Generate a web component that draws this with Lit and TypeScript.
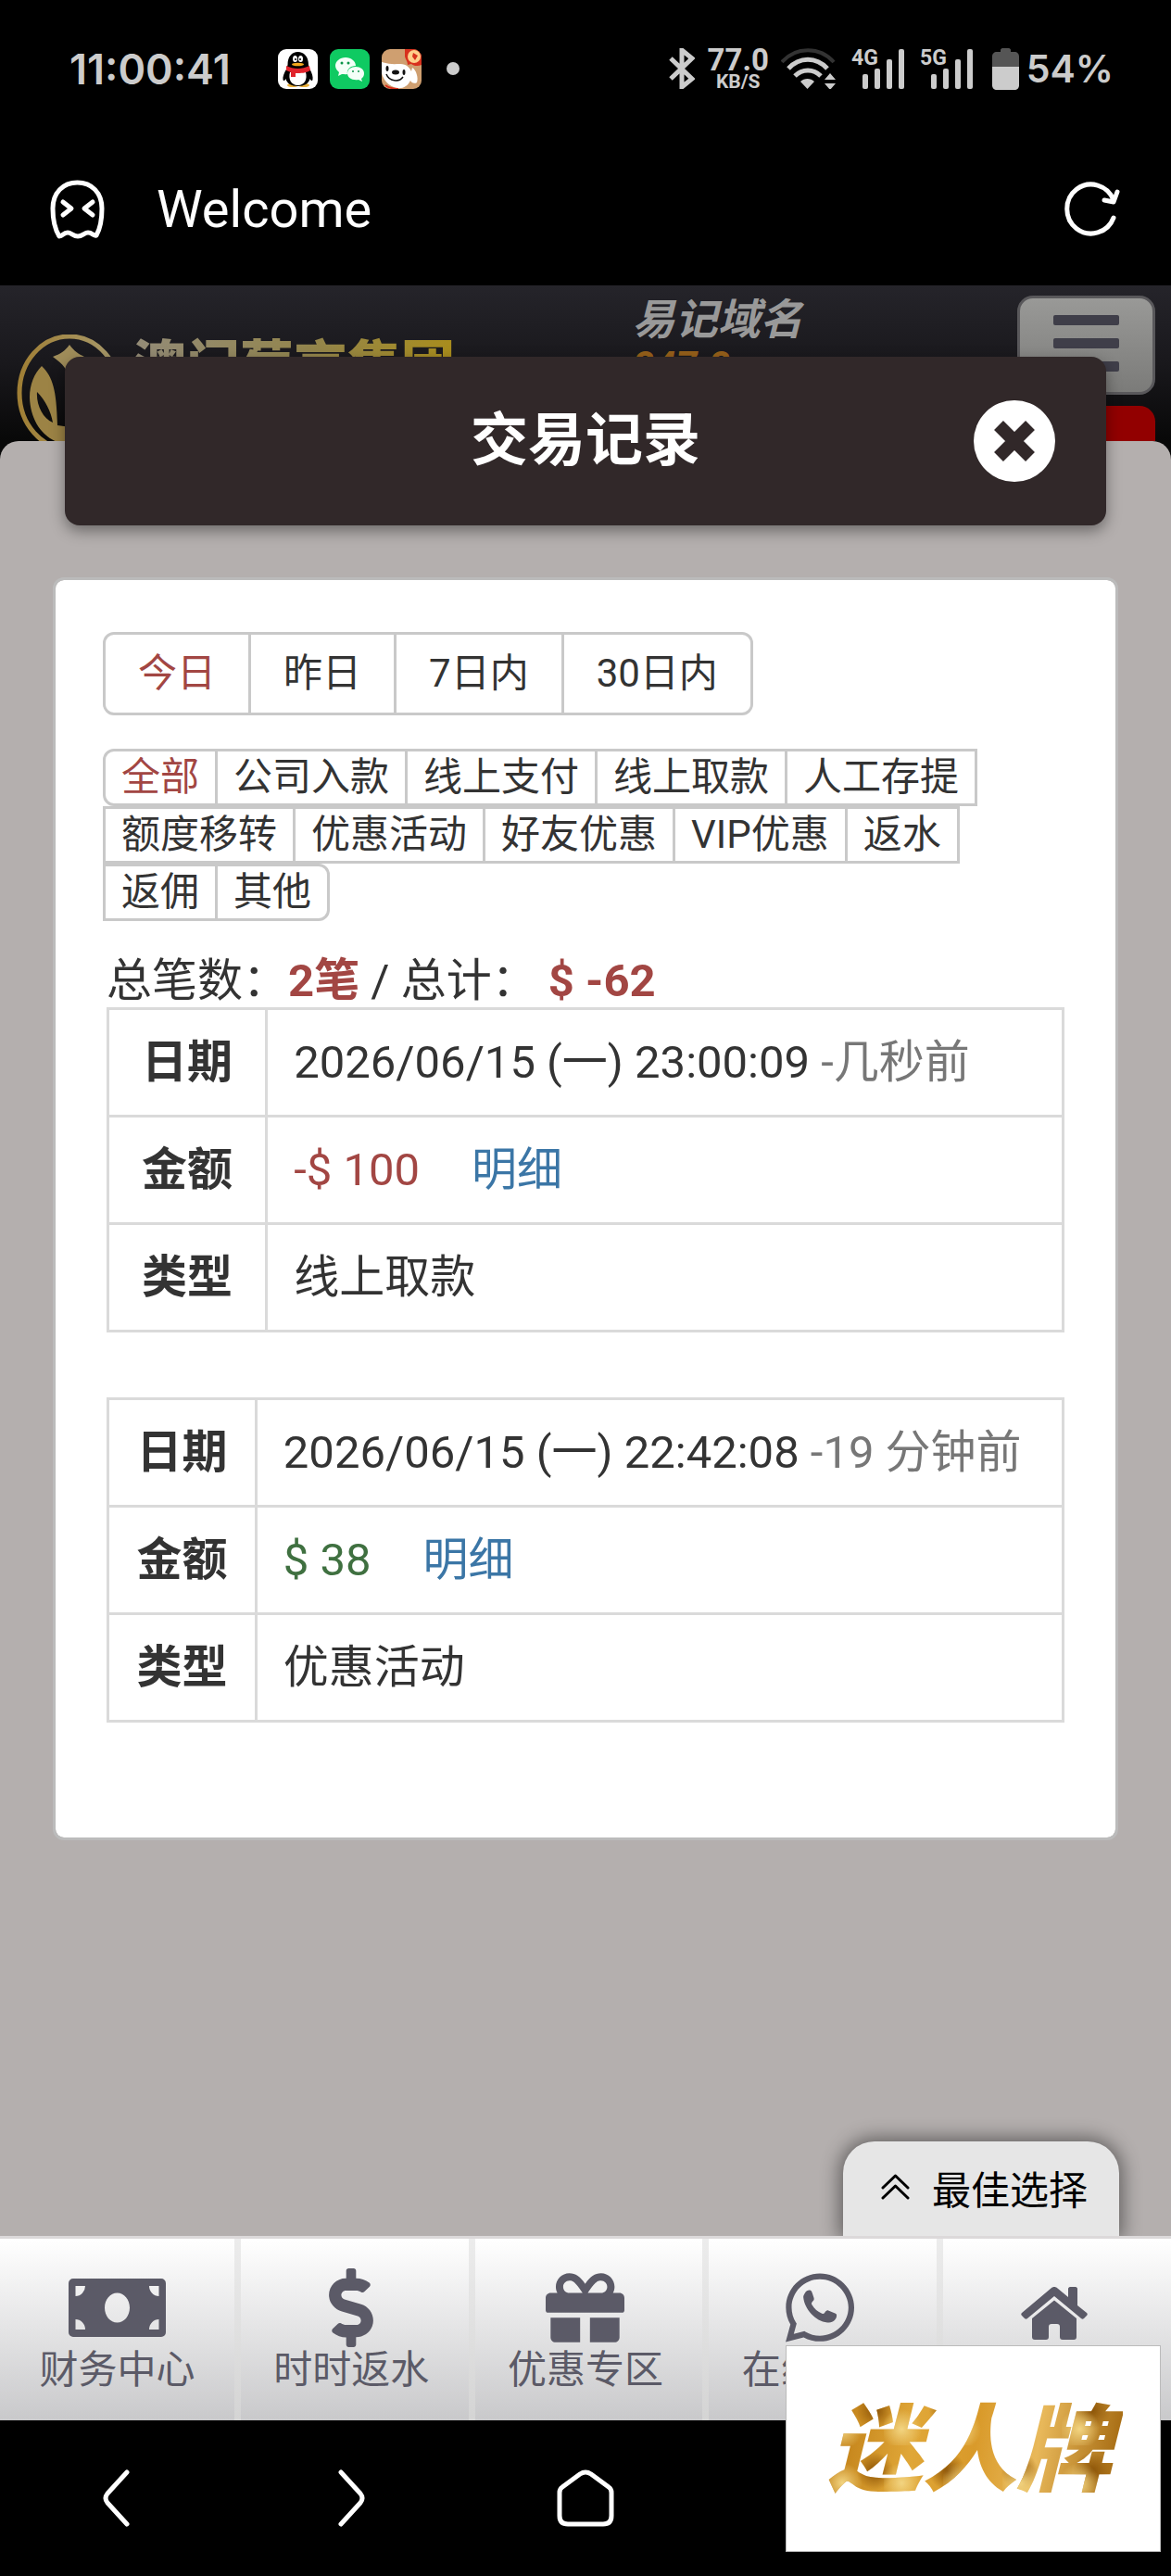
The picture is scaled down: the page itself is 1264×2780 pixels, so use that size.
import { LitElement, html, css, svg } from "lit";
import { customElement, state } from "lit/decorators.js";
import { classMap } from "lit/directives/class-map.js";

interface TradeRecord {
  date: string;
  ago: string;
  amount: string;
  positive: boolean;
  kind: string;
}

const RANGES = ["今日", "昨日", "7日内", "30日内"];

const KINDS = [
  "全部", "公司入款", "线上支付", "线上取款", "人工存提",
  "额度移转", "优惠活动", "好友优惠", "VIP优惠", "返水",
  "返佣", "其他",
];

const RECORDS: TradeRecord[] = [
  { date: "2026/06/15 (一) 23:00:09", ago: "-几秒前", amount: "-$ 100", positive: false, kind: "线上取款" },
  { date: "2026/06/15 (一) 22:42:08", ago: "-19 分钟前", amount: "$ 38", positive: true, kind: "优惠活动" },
];

const moneyIcon = svg`<svg width="105" height="85" viewBox="0 0 105 85" aria-hidden="true">
  <path fill-rule="evenodd" d="M5 11h95a5 5 0 0 1 5 5v53a5 5 0 0 1-5 5H5a5 5 0 0 1-5-5V16a5 5 0 0 1 5-5z
    M52.500 26.500c-7.500 0-13.500 7-13.500 16s6 16 13.500 16 13.500-7 13.500-16-6-16-13.500-16z
    M7.500 19v11a10.500 11 0 0 0 10.500-11z M97.500 19v11a10.500 11 0 0 1-10.500-11z
    M7.500 66v-11a10.500 11 0 0 1 10.500 11z M97.500 66v-11a10.500 11 0 0 0-10.500 11z"/></svg>`;

const dollarIcon = svg`<svg width="48" height="85" viewBox="0 0 288 512" aria-hidden="true">
  <path d="M209.200 233.400l-108-31.600C88.700 198.200 80 186.500 80 173.500c0-16.300 13.200-29.500 29.500-29.500h66.300c12.200 0 24.200 3.700 34.200 10.500 6.100 4.100 14.300 3.100 19.500-2l34.800-34c7.100-6.900 6.100-18.400-1.800-24.500C238 74.800 207.400 64.100 176 64V16c0-8.800-7.200-16-16-16h-32c-8.800 0-16 7.200-16 16v48h-2.500C45.800 64-5.400 118.700.500 183.600c4.200 46.100 39.400 83.600 83.800 96.600l102.500 30c12.500 3.700 21.200 15.300 21.200 28.300 0 16.300-13.200 29.500-29.500 29.500h-66.300C100 368 88 364.300 78 357.500c-6.100-4.100-14.300-3.100-19.500 2l-34.800 34c-7.100 6.900-6.100 18.400 1.800 24.500 24.500 19.200 55.100 29.900 86.500 30v48c0 8.800 7.200 16 16 16h32c8.800 0 16-7.200 16-16v-48.200c46.600-.900 90.300-28.600 105.700-72.700 21.500-61.600-14.600-124.800-72.500-141.700z"/></svg>`;

const giftIcon = svg`<svg width="85" height="85" viewBox="0 0 512 512" aria-hidden="true">
  <path d="M32 448c0 17.700 14.300 32 32 32h160V320H32v128zm256 32h160c17.700 0 32-14.300 32-32V320H288v160zm192-320h-42.100c6.200-12.100 10.100-25.500 10.100-40 0-48.500-39.500-88-88-88-41.600 0-68.500 21.300-103 68.300-34.500-47-61.400-68.300-103-68.300-48.500 0-88 39.500-88 88 0 14.500 3.800 27.900 10.100 40H32c-17.700 0-32 14.300-32 32v80c0 8.800 7.200 16 16 16h480c8.800 0 16-7.200 16-16v-80c0-17.700-14.300-32-32-32zm-326.100 0c-22.100 0-40-17.900-40-40s17.900-40 40-40c19.900 0 34.600 3.300 86.100 80h-86.100zm206.100 0h-86.100c51.400-76.500 65.700-80 86.100-80 22.100 0 40 17.900 40 40s-17.900 40-40 40z"/></svg>`;

const chatIcon = svg`<svg width="74" height="85" viewBox="0 0 448 512" aria-hidden="true">
  <path d="M380.900 97.100C339 55.100 283.200 32 223.900 32c-122.400 0-222 99.600-222 222 0 39.100 10.200 77.300 29.600 111L0 480l117.700-30.900c32.400 17.700 68.900 27 106.100 27h.100c122.300 0 224.100-99.600 224.100-222 0-59.300-25.200-115-67.100-157zm-157 341.600c-33.200 0-65.700-8.900-94-25.700l-6.700-4-69.800 18.300L72 359.200l-4.400-7c-18.500-29.400-28.200-63.300-28.200-98.200 0-101.700 82.800-184.500 184.600-184.500 49.300 0 95.600 19.200 130.400 54.100 34.800 34.900 56.200 81.200 56.100 130.500 0 101.800-84.900 184.600-186.600 184.600z"/>
  <path d="M126 160c8-14 24-22 36-18 8 3 10 10 13 20l10 30c3 10-2 16-10 25-7 8-7 12-3 19 15 26 38 46 66 58 8 3 12 1 17-5 8-11 14-18 24-15l44 19c10 5 12 9 10 20-5 26-30 40-60 40-80-8-150-90-157-165-1-11 5-20 10-28z"/></svg>`;

const homeIcon = svg`<svg width="72" height="85" viewBox="0 0 72 85" aria-hidden="true">
  <path d="M32.500 21.500c2-2 5-2 7 0L51 31V22c0-1 1-2 2-2h6c1 0 2 1 2 2v18l10 8c1 1 1 2 0 3l-3 3c-1 1-2 1-3 0L36 30 7 54c-1 1-2 1-3 0l-3-3c-1-1-1-2 0-3z"/>
  <path d="M36 34.500L60 54v20c0 2-1 3-3 3H45c-2 0-3-1-3-3V63c0-2-1-3-3-3h-6c-2 0-3 1-3 3v11c0 2-1 3-3 3H15c-2 0-3-1-3-3V54z"/></svg>`;

const NAV = [
  { label: "财务中心", icon: moneyIcon },
  { label: "时时返水", icon: dollarIcon },
  { label: "优惠专区", icon: giftIcon },
  { label: "在线客服", icon: chatIcon },
  { label: "首页", icon: homeIcon },
];

const signal = (label: string) => svg`<svg class="signal" width="58" height="44" viewBox="0 0 58 44" role="img" aria-label=${label}>
  <text x="0" y="18" class="net">${label}</text>
  <rect x="12" y="28" width="6" height="16" rx="2"/><rect x="25" y="22" width="6" height="22" rx="2"/>
  <rect x="38" y="12" width="6" height="32" rx="2"/><rect x="51" y="1" width="6" height="43" rx="2"/></svg>`;

@customElement("status-bar")
export class StatusBar extends LitElement {
  static styles = css`
    :host {
      display: flex;
      align-items: center;
      height: 148px;
      padding: 0 62px 0 75px;
      color: #ccc;
      font-family: Inter, "Noto Sans CJK SC", sans-serif;
    }
    svg { display: block; flex: none; fill: currentColor; }
    .time { font-size: 45px; font-weight: 600; }
    .apps { display: flex; align-items: center; gap: 13px; margin-left: 51px; }
    .dot { width: 14px; height: 14px; margin-left: 27px; border-radius: 50%; background: #ccc; }
    .right { display: flex; align-items: center; margin-left: auto; }
    .speed { display: flex; flex-direction: column; align-items: center; width: 70px; margin: 0 11px 0 12px; font-family: Roboto, sans-serif; font-weight: 700; }
    .rate { font-size: 33px; line-height: 28px; }
    .unit { font-size: 21px; line-height: 18px; }
    .wifi { margin-right: 16px; }
    .cell { display: flex; gap: 16px; }
    .signal { overflow: visible; }
    .net { font: 700 23px Roboto, sans-serif; }
    .battery { margin: 0 8px 0 20px; }
    .percent { font-size: 41px; font-weight: 600; }
  `;

  render() {
    return html`
      <span class="time">11:00:41</span>
      <div class="apps">
        <svg width="43" height="43" viewBox="0 0 43 43" aria-hidden="true">
          <rect width="43" height="43" rx="9" fill="#fff"/>
          <ellipse cx="16" cy="39" rx="6" ry="2" fill="#eab03a"/><ellipse cx="28" cy="39" rx="6" ry="2" fill="#eab03a"/>
          <path fill="#000" d="M10.500 17C10.500 8 15 3 21.500 3S33 8 33 17l1 4c3 5 4 9 3.500 12-.500 2-2 1-3-1-1 5-6 8-13 8s-12-3-13-8c-1 2-2.500 3-3 1-.500-3 1-7 4-12z"/>
          <path fill="#fff" d="M13 25h17c2 7-1 14-8.500 14S11 32 13 25z"/>
          <path fill="#e0242c" d="M9 18c8 4 17 4 25 0l1 5c-5 3-10 3-16 3v4h-5v-5l-5-2z"/>
          <ellipse cx="18.500" cy="10.500" rx="2.500" ry="3.500" fill="#fff"/><ellipse cx="24.500" cy="10.500" rx="2.500" ry="3.500" fill="#fff"/>
          <circle cx="19" cy="11" r="1" fill="#000"/><circle cx="24" cy="11" r="1" fill="#000"/>
          <ellipse cx="21.500" cy="16.500" rx="6.500" ry="1.700" fill="#f3a81c"/>
        </svg>
        <svg width="43" height="43" viewBox="0 0 43 43" aria-hidden="true">
          <rect width="43" height="43" rx="9" fill="#0fca62"/>
          <path fill="#f4fff8" d="M17 9c6 0 11 4 11 9-6 0-10 4-9 9-2 .500-4 0-6 0l-4 2 1-4c-2-2-4-4-4-7 0-5 5-9 11-9z"/>
          <path fill="#f4fff8" d="M28 19c5 0 9 3 9 7 0 3-1 4-3 6l1 3-4-2c-7 1-12-2-12-7 0-4 4-7 9-7z"/>
          <circle cx="13" cy="15" r="1.500" fill="#0a9448"/><circle cx="20" cy="15" r="1.500" fill="#0a9448"/>
          <circle cx="25" cy="24" r="1" fill="#0a9448"/><circle cx="31" cy="24" r="1" fill="#0a9448"/>
        </svg>
        <svg width="43" height="43" viewBox="0 0 43 43" aria-hidden="true">
          <defs><clipPath id="tile"><rect width="43" height="43" rx="9"/></clipPath></defs>
          <g clip-path="url(#tile)">
            <rect width="43" height="43" fill="#cf9f70"/>
            <path fill="#d8311d" d="M25 0h18v17c-4 2-9 1-11-1l-4 1c0-4-2-5-3-9z"/>
            <circle cx="35" cy="8" r="7" fill="#ffcf8b"/><path fill="#d8311d" d="M34 4l5 3-3 5-3-4z"/>
            <path fill="#fff" d="M0 14c10 3 15 2 20 2 7 0 10 4 12 8l1-4c4 2 7 11 5 16-3 2-6 0-7-2-3 6-8 9-15 8C8 40 2 34 0 26z"/>
            <ellipse cx="15" cy="25" rx="4" ry="2.500" fill="#111"/>
            <ellipse cx="6" cy="21" rx="1.500" ry="3" fill="#111"/><ellipse cx="24" cy="25" rx="1.500" ry="3" fill="#111"/>
            <path d="M5 27c3 8 14 9 18 3" fill="none" stroke="#111" stroke-width="1.500"/>
            <path d="M4 39c4 3 9 4 14 4" fill="none" stroke="#d8311d" stroke-width="2"/>
          </g>
        </svg>
      </div>
      <span class="dot"></span>
      <div class="right">
        <svg width="28" height="44" viewBox="0 0 28 44" role="img" aria-label="蓝牙">
          <path d="M2 11l23 22-11 9V2l11 9L2 33" fill="none" stroke="currentColor" stroke-width="5"/>
        </svg>
        <div class="speed"><span class="rate">77.0</span><span class="unit">KB/S</span></div>
        <svg class="wifi" width="60" height="44" viewBox="0 0 60 44" role="img" aria-label="无线网络">
          <g fill="none" stroke="currentColor" stroke-width="4">
            <path d="M1 15C16-2 42-2 57 15" stroke="#333"/>
            <path d="M8 22c12-13 30-13 42 0M15 30c8-8 20-8 28 0" stroke-width="5"/>
          </g>
          <path d="M21 36c4-4 11-4 15 0l-7.500 8z"/>
          <path d="M47 34h12l-6-7zM47 38h12l-6 7z"/>
        </svg>
        <div class="cell">${signal("4G")}${signal("5G")}</div>
        <svg class="battery" width="29" height="45" viewBox="0 0 29 45" role="img" aria-label="电量">
          <path fill="#555" d="M9 2c0-1 1-2 2-2h7c1 0 2 1 2 2v2h4c3 0 5 2 5 5v12H0V9c0-3 2-5 5-5h4z"/>
          <path d="M0 20h29v20c0 3-2 5-5 5H5c-3 0-5-2-5-5z"/>
        </svg>
        <span class="percent">54%</span>
      </div>
    `;
  }
}

@customElement("record-table")
export class RecordTable extends LitElement {
  static properties = { record: { attribute: false } };
  declare record: TradeRecord;

  static styles = css`
    :host { display: block; }
    table { width: 100%; border-collapse: collapse; font-size: 49px; line-height: 57px; }
    th, td { padding: 28px; border: 3px solid #dadada; text-align: left; white-space: nowrap; }
    th { font-weight: 700; text-align: center; }
    td { font-weight: 400; }
    .ago { color: #777; }
    .minus { color: #a24643; }
    .plus { color: #3f7040; }
    .detail { margin-left: 56px; color: #3b76a6; text-decoration: none; }
  `;

  render() {
    const r = this.record;
    return html`
      <table>
        <tbody>
          <tr><th scope="row">日期</th><td>${r.date} <span class="ago">${r.ago}</span></td></tr>
          <tr><th scope="row">金额</th><td><span class=${r.positive ? "plus" : "minus"}>${r.amount}</span><a class="detail" href="#detail">明细</a></td></tr>
          <tr><th scope="row">类型</th><td>${r.kind}</td></tr>
        </tbody>
      </table>
    `;
  }
}

@customElement("app-root")
export class AppRoot extends LitElement {
  @state() private range = 0;
  @state() private kind = 0;

  static styles = css`
    :host {
      position: relative;
      display: flex;
      flex-direction: column;
      min-height: 100vh;
      background: #000;
      color: #333;
      font-family: Roboto, "Noto Sans CJK SC", sans-serif;
    }
    button { margin: 0; padding: 0; border: 0; background: none; color: inherit; font: inherit; cursor: pointer; }
    a { color: inherit; text-decoration: none; }
    svg { display: block; flex: none; }

    .browser { display: flex; align-items: center; height: 160px; padding: 0 55px 4px 54px; box-sizing: border-box; color: #fff; }
    .page-name { margin-left: 55px; font-size: 56px; line-height: 66px; }
    .reload { margin-left: auto; }
    .stroke { fill: none; stroke: currentColor; stroke-linecap: round; stroke-linejoin: round; }

    .site { display: grid; grid-template-columns: 54% 1fr auto; align-items: start; height: 168px; overflow: hidden; background: linear-gradient(#25242a, #19181c 50%, #080808); }
    .brand { display: flex; gap: 11px; padding: 53px 0 0 18px; }
    .brand-name { font-size: 58px; font-weight: 900; line-height: 68px; white-space: nowrap; color: transparent; background: linear-gradient(90deg, #948c78, #93854d 55%, #a98d1c); background-clip: text; -webkit-background-clip: text; }
    .domain { padding-top: 12px; font-style: italic; font-weight: 700; }
    .domain-label { font-size: 46px; line-height: 50px; color: #999; }
    .domain-name { font-size: 42px; line-height: 50px; color: #96601a; }
    .tools { display: flex; flex-direction: column; gap: 12px; padding: 11px 17px 0 0; }
    .menu { display: flex; flex-direction: column; align-items: center; gap: 14px; box-sizing: border-box; width: 149px; height: 107px; padding-top: 18px; border: 3px solid #59585b; border-radius: 17px; background: linear-gradient(#999997, #7b7b79); }
    .menu-bar { width: 71px; height: 11px; border-radius: 2px; background: #3f3e49; }
    .alert { height: 60px; border-radius: 17px 17px 0 0; background: #920000; }

    .under { display: flex; flex: 1; flex-direction: column; background: #080808; }
    .panel { display: flex; flex: 1; flex-direction: column; border-radius: 20px 20px 0 0; background: #b4afae; }
    .title-bar { position: relative; display: grid; grid-template-columns: 1fr auto 1fr; align-items: center; height: 182px; margin: -91px 70px 0; padding: 0 55px; border-radius: 16px; background: #312829; box-shadow: 0 6px 16px rgba(0, 0, 0, 0.4); }
    .title { grid-column: 2; margin: 0; color: #fff; font-size: 62px; font-weight: 700; line-height: 80px; }
    .close { justify-self: end; }

    .card { margin: 56px 57px 0; padding: 56px 51px 124px; border: 3px solid #bbb; border-radius: 12px; background: #fff; background-clip: padding-box; }
    .ranges, .kinds { display: flex; flex-wrap: wrap; padding-right: 4px; font-size: 42px; }
    .ranges { line-height: 84px; }
    .kinds { margin-top: 36px; line-height: 56px; }
    .choice { margin-right: -3px; border: 3px solid #c9c9c9; }
    .ranges .choice { padding: 0 35px; }
    .kinds .choice { padding: 0 17px; }
    .choice:first-child { border-radius: 12px 0 0 12px; }
    .choice:last-child { border-radius: 0 12px 12px 0; }
    .active { color: #a24643; }

    .summary { margin: 37px 0 0; padding: 0 4px; font-size: 49px; line-height: 56px; }
    .summary strong { color: #a24643; }
    .records { display: flex; flex-direction: column; gap: 70px; padding: 0 4px; }

    .best { position: relative; display: flex; align-items: center; gap: 24px; align-self: flex-end; box-sizing: border-box; height: 102px; margin: auto 56px 0 0; padding: 0 34px 4px 41px; border-radius: 34px 34px 0 0; background: #e6e6e6; color: #000; font-size: 42px; box-shadow: 0 0 20px 4px rgba(0, 0, 0, 0.45); clip-path: inset(-40px -40px 0 -40px); }

    .nav { display: grid; grid-template-columns: repeat(5, 1fr); border-top: 3px solid #dcd9da; background: linear-gradient(#fff, #c9c9cb); }
    .tab { display: flex; flex-direction: column; align-items: center; height: 164px; padding-top: 32px; color: #5b5a67; font-size: 42px; line-height: 50px; }
    .tab + .tab { background: linear-gradient(#ececec, #d4d4d4) left / 7px 100% no-repeat; }
    .tab svg { fill: currentColor; }

    .system { display: grid; grid-template-columns: repeat(5, 1fr); align-items: center; height: 168px; color: #fff; }
    .system button { justify-self: center; }

    .promo { position: absolute; right: 11px; bottom: 26px; display: flex; align-items: center; justify-content: center; box-sizing: border-box; width: 405px; height: 223px; border: 1px solid #bbb; background: #fff; }
    .promo-name {
      padding: 4px 12px 0 4px;
      font-size: 102px;
      font-style: italic;
      font-weight: 900;
      line-height: 120px;
      color: transparent;
      background:
        radial-gradient(circle at 30% 70%, #f2d481 0, transparent 22px) 0 0 / 64px 58px,
        radial-gradient(circle at 70% 30%, #8a5206 0, transparent 20px) 0 0 / 78px 66px,
        linear-gradient(100deg, #b9760f, #e0a738 30%, #d99a2a 50%, #e8b85a 70%, #9c6008);
      background-clip: text;
      -webkit-background-clip: text;
    }
  `;

  private choices(list: string[], current: number, pick: (i: number) => void) {
    return list.map((label, i) => html`
      <button type="button" class=${classMap({ choice: true, active: i === current })}
        aria-pressed=${i === current ? "true" : "false"} @click=${() => pick(i)}>${label}</button>`);
  }

  render() {
    return html`
      <status-bar></status-bar>
      <div class="browser">
        <svg class="stroke" width="60" height="64" viewBox="0 0 60 64" stroke-width="5" aria-hidden="true">
          <path d="M10 61C5 53 3 42 3 31 3 14 14 3 29.500 3S56 14 56 31c0 11-2 22-6 29-4 1-4-3-9-3-4 0-6 4-11 4s-7-4-11-4c-5 0-5 4-9 4z"/>
          <path d="M14 24l9 7-9 7M46 24l-9 7 9 7"/>
        </svg>
        <span class="page-name">Welcome</span>
        <button class="reload" type="button" aria-label="刷新">
          <svg class="stroke" width="60" height="60" viewBox="0 0 60 60" stroke-width="5" aria-hidden="true">
            <path d="M53 39A26 26.500 0 1 1 53 20M43 20l10 2 4-11"/>
          </svg>
        </button>
      </div>

      <header class="site">
        <div class="brand">
          <svg width="114" height="130" viewBox="0 0 114 130" aria-hidden="true">
            <defs><linearGradient id="gold" x1="0" x2="1"><stop offset="0" stop-color="#a07f35"/><stop offset="1" stop-color="#a89a6d"/></linearGradient></defs>
            <ellipse cx="57" cy="63" rx="54" ry="61" fill="none" stroke="url(#gold)" stroke-width="5"/>
            <path fill="#a08d5a" d="M57 11c5 7 10 10 16 13-3 12-4 50-5 80H56V50c0-12-6-18-17-26 8-3 13-6 18-13z"/>
            <path fill="#9c8345" fill-rule="evenodd" d="M27 34c12 12 16 25 17 64l14 2v20C30 116 15 95 14 68c0-14 5-26 13-34zm-5 28c-1 14 6 28 17 33-2-12-8-24-17-33z"/>
          </svg>
          <span class="brand-name">澳门葡京集团</span>
        </div>
        <div class="domain">
          <div class="domain-label">易记域名</div>
          <div class="domain-name">847.8</div>
        </div>
        <div class="tools">
          <button class="menu" type="button" aria-label="菜单">
            <span class="menu-bar"></span><span class="menu-bar"></span><span class="menu-bar"></span>
          </button>
          <div class="alert"></div>
        </div>
      </header>

      <main class="under">
        <div class="panel">
          <div class="title-bar">
            <h1 class="title">交易记录</h1>
            <button class="close" type="button" aria-label="关闭">
              <svg width="88" height="88" viewBox="0 0 88 88" aria-hidden="true">
                <circle cx="44" cy="44" r="44" fill="#fff"/>
                <path d="M27 27l34 34M61 27L27 61" stroke="#312829" stroke-width="14"/>
              </svg>
            </button>
          </div>
          <section class="card">
            <div class="ranges" role="group" aria-label="日期范围">
              ${this.choices(RANGES, this.range, (i) => (this.range = i))}
            </div>
            <div class="kinds" role="group" aria-label="交易类型">
              ${this.choices(KINDS, this.kind, (i) => (this.kind = i))}
            </div>
            <p class="summary">总笔数：<strong>2笔</strong> / 总计： <strong>$ -62</strong></p>
            <div class="records">
              ${RECORDS.map((r) => html`<record-table .record=${r}></record-table>`)}
            </div>
          </section>
          <button class="best" type="button">
            <svg class="stroke" width="31" height="30" viewBox="0 0 31 30" stroke-width="3" aria-hidden="true">
              <path d="M2 16L15.500 3 29 16M2 27l13.500-13L29 27"/>
            </svg>
            <span>最佳选择</span>
          </button>
        </div>
      </main>

      <nav class="nav">
        ${NAV.map((n) => html`<a class="tab" href="#nav">${n.icon}<span>${n.label}</span></a>`)}
      </nav>

      <div class="system">
        <button type="button" aria-label="后退">
          <svg class="stroke" width="30" height="62" viewBox="0 0 30 62" stroke-width="5" aria-hidden="true"><path d="M26 3L5 26q-4 5 0 10l21 23"/></svg>
        </button>
        <button type="button" aria-label="前进">
          <svg class="stroke" width="30" height="62" viewBox="0 0 30 62" stroke-width="5" aria-hidden="true"><path d="M4 3l21 23q4 5 0 10L4 59"/></svg>
        </button>
        <button type="button" aria-label="主页">
          <svg class="stroke" width="62" height="62" viewBox="0 0 62 62" stroke-width="5" aria-hidden="true"><path d="M3 25q0-4 3-6L25 5q6-4 12 0l19 14q3 2 3 6v25q0 9-9 9H12q-9 0-9-9z"/></svg>
        </button>
      </div>

      <aside class="promo"><span class="promo-name">迷人牌</span></aside>
    `;
  }
}
